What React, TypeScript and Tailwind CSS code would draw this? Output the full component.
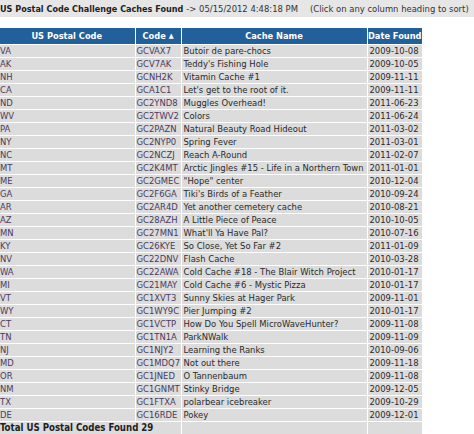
import React from "react";

const rows: [string, string, string, string][] = [
  ["VA", "GCVAX7", "Butoir de pare-chocs", "2009-10-08"],
  ["AK", "GCV7AK", "Teddy's Fishing Hole", "2009-10-05"],
  ["NH", "GCNH2K", "Vitamin Cache #1", "2009-11-11"],
  ["CA", "GCA1C1", "Let's get to the root of it.", "2009-11-11"],
  ["ND", "GC2YND8", "Muggles Overhead!", "2011-06-23"],
  ["WV", "GC2TWV2", "Colors", "2011-06-24"],
  ["PA", "GC2PAZN", "Natural Beauty Road Hideout", "2011-03-02"],
  ["NY", "GC2NYP0", "Spring Fever", "2011-03-01"],
  ["NC", "GC2NCZJ", "Reach A-Round", "2011-02-07"],
  ["MT", "GC2K4MT", "Arctic Jingles #15 - Life in a Northern Town", "2011-01-01"],
  ["ME", "GC2GMEC", "\"Hope\" center", "2010-12-04"],
  ["GA", "GC2F6GA", "Tiki's Birds of a Feather", "2010-09-24"],
  ["AR", "GC2AR4D", "Yet another cemetery cache", "2010-08-21"],
  ["AZ", "GC28AZH", "A Little Piece of Peace", "2010-10-05"],
  ["MN", "GC27MN1", "What'll Ya Have Pal?", "2010-07-16"],
  ["KY", "GC26KYE", "So Close, Yet So Far #2", "2011-01-09"],
  ["NV", "GC22DNV", "Flash Cache", "2010-03-28"],
  ["WA", "GC22AWA", "Cold Cache #18 - The Blair Witch Project", "2010-01-17"],
  ["MI", "GC21MAY", "Cold Cache #6 - Mystic Pizza", "2010-01-17"],
  ["VT", "GC1XVT3", "Sunny Skies at Hager Park", "2009-11-01"],
  ["WY", "GC1WY9C", "Pier Jumping #2", "2010-01-17"],
  ["CT", "GC1VCTP", "How Do You Spell MicroWaveHunter?", "2009-11-08"],
  ["TN", "GC1TN1A", "ParkNWalk", "2009-11-09"],
  ["NJ", "GC1NJY2", "Learning the Ranks", "2010-09-06"],
  ["MD", "GC1MDQ7", "Not out there", "2009-11-18"],
  ["OR", "GC1JNED", "O Tannenbaum", "2009-11-08"],
  ["NM", "GC1GNMT", "Stinky Bridge", "2009-12-05"],
  ["TX", "GC1FTXA", "polarbear icebreaker", "2009-10-29"],
  ["DE", "GC16RDE", "Pokey", "2009-12-01"],
];

const font = { fontFamily: '"DejaVu Sans Condensed", "DejaVu Sans", sans-serif' };

export default function App() {
  return (
    <div className="w-[474px] h-[434px] overflow-hidden bg-white" style={font}>
      <div className="h-[17px] bg-[#e6e6e6] flex items-center text-[9.4px] text-[#333] whitespace-nowrap leading-[12px]">
        <span className="font-bold text-[#222] text-[9px]">US Postal Code Challenge Caches Found</span>
        <span className="ml-[3px]">-&gt; 05/15/2012 4:48:18 PM</span>
        <span className="ml-[12px]">(Click on any column heading to sort)</span>
      </div>
      <div className="h-[11px]" />
      <table className="border-collapse table-fixed w-[423px] -ml-[1px] text-[9.4px] leading-[12px]">
        <colgroup>
          <col className="w-[136px]" />
          <col className="w-[46px]" />
          <col className="w-[186px]" />
          <col className="w-[55px]" />
        </colgroup>
        <thead>
          <tr className="h-[16px] bg-[#22609c] text-white font-bold text-[9.2px]">
            <th className="border border-white border-t-0 border-l-0 p-0 text-center">US Postal Code</th>
            <th className="border border-white border-t-0 p-0 text-center whitespace-nowrap">
              Code <span className="text-[7px] align-[1px]">▲</span>
            </th>
            <th className="border border-white border-t-0 p-0 text-center">Cache Name</th>
            <th className="border border-white border-t-0 border-r-0 p-0 text-center whitespace-nowrap">Date Found</th>
          </tr>
        </thead>
        <tbody>
          {rows.map((r) => (
            <tr key={r[1]} className="h-[13px] bg-[#dcdcdc]">
              <td className="border border-white border-l-0 p-0 pl-[1px] text-[#4a3a5e] whitespace-nowrap">{r[0]}</td>
              <td className="border border-white p-0 pl-[1px] text-[#4a3a5e] whitespace-nowrap overflow-hidden">{r[1]}</td>
              <td className="border border-white p-0 pl-[2px] text-[#2a2a2a] whitespace-nowrap overflow-hidden">{r[2]}</td>
              <td className="border border-white border-r-0 p-0 pl-[2px] text-[#2a2a2a] whitespace-nowrap overflow-hidden">{r[3]}</td>
            </tr>
          ))}
          <tr className="h-[13px] bg-[#dcdcdc]">
            <td colSpan={2} className="border border-white border-l-0 p-0 pl-[1px] font-bold text-[9.6px] text-[#222] whitespace-nowrap">
              Total US Postal Codes Found 29
            </td>
            <td className="border border-white p-0"></td>
            <td className="border border-white border-r-0 p-0"></td>
          </tr>
        </tbody>
      </table>
    </div>
  );
}
